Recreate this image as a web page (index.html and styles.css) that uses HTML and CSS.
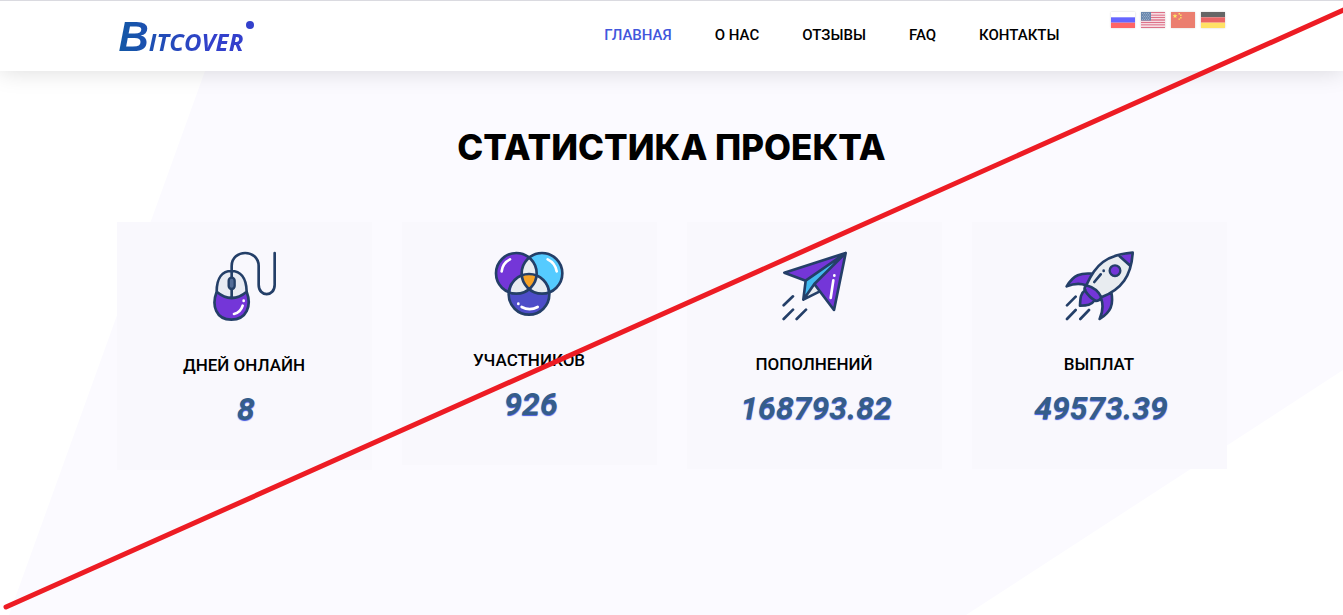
FILE: index.html
```
<!DOCTYPE html>
<html lang="ru">
<head>
<meta charset="utf-8">
<title>Bitcover</title>
<link rel="stylesheet" href="styles.css">
</head>
<body class="page">
<header class="header">
  <div class="container header-row">
    <a class="logo" href="#"><span class="logo-initial">B</span><span class="logo-rest">ITCOVER</span><span class="logo-dot"></span></a>
    <nav class="nav">
      <a class="nav-link active" href="#">ГЛАВНАЯ</a>
      <a class="nav-link" href="#">О НАС</a>
      <a class="nav-link" href="#">ОТЗЫВЫ</a>
      <a class="nav-link" href="#">FAQ</a>
      <a class="nav-link" href="#">КОНТАКТЫ</a>
    </nav>
    <div class="flags">
      <a class="flag" href="#" aria-label="Русский"><svg viewBox="0 0 24 16"><path fill="#fff" d="M0 0h24v16H0z"/><path fill="#00f" d="M0 5.3h24v5.4H0z"/><path fill="red" d="M0 10.7h24V16H0z"/></svg></a>
      <a class="flag" href="#" aria-label="English"><svg viewBox="0 0 24 16"><path fill="#fff" d="M0 0h24v16H0z"/><path stroke="#c8143c" stroke-width="1.4" d="M0 .6h24M0 3.1h24M0 5.5h24M0 8h24M0 10.5h24M0 12.9h24M0 15.4h24"/><path fill="#0a3a78" d="M0 0h10v8.6H0z"/><path stroke="#8fa8c8" stroke-width=".7" stroke-dasharray=".8 1.2" d="M1 1.5h8M2 3h8M1 4.5h8M2 6h8M1 7.5h8"/></svg></a>
      <a class="flag" href="#" aria-label="中文"><svg viewBox="0 0 24 16"><path fill="#de2910" d="M0 0h24v16H0z"/><path fill="#ffde00" d="m4 1.6.6 1.7h1.8L5 4.4l.5 1.8L4 5.1 2.500 6.200 3 4.400 1.600 3.300h1.800zM7.500 1h1.500v1.400H7.500zM9.200 2.600h1.300V4H9.200zM9.200 5h1.300v1.400H9.200zM7.500 6.500h1.400v1.300H7.500z"/></svg></a>
      <a class="flag" href="#" aria-label="Deutsch"><svg viewBox="0 0 24 16"><path d="M0 0h24v5.300H0z"/><path fill="#d00" d="M0 5.300h24v5.400H0z"/><path fill="#ffce00" d="M0 10.700h24V16H0z"/></svg></a>
    </div>
  </div>
</header>
<main class="stats">
  <svg class="backdrop" viewBox="0 0 1343 544" preserveAspectRatio="none" aria-hidden="true"><path d="M205 0H1343V299L966 544H9z"/></svg>
  <div class="container">
    <h1 class="title">СТАТИСТИКА ПРОЕКТА</h1>
    <div class="cards">
      <section class="card">
        <svg class="icon" width="70" height="70" viewBox="57 36 210 210">
          <path fill="#e8ebf3" d="M80 155C80 112 98 93 124 93s45 19 46 62q-46 40-90 0z"/>
          <path fill="#7436d8" d="M80 155q45 38 90 0c16 42 0 84-46 84s-60-42-44-84z"/>
          <path class="line" d="M80 155C80 112 98 93 124 93s45 19 46 62c16 42 0 84-46 84s-60-42-44-84zq45 38 90 0M125 93V78c0-52 81-52 81 0v56c0 38 48 38 48 0V39M125 93v80"/>
          <rect x="116" y="113" width="18" height="34" rx="9" fill="#536d98" stroke="#243f68" stroke-width="7"/>
          <path class="shine" d="M158 197q-6 20-26 25M161 182v1"/>
        </svg>
        <h2 class="label">ДНЕЙ ОНЛАЙН</h2>
        <p class="value">8</p>
      </section>
      <section class="card">
        <svg class="icon" width="70" height="65" viewBox="43 36 210 195">
          <circle cx="110" cy="100" r="61" fill="#7436d8"/><circle cx="187" cy="100" r="61" fill="#55cbff"/><circle cx="148" cy="163" r="61" fill="#4d4dc8"/>
          <path fill="#e8ecf0" d="M148 52q23 23 22 54-22-9-43 0-1-31 21-54zM127 106q2 26 21 41-22 17-56 13 3-39 35-54zM170 106q-2 26-22 41 25 17 57 13-3-39-35-54z"/>
          <path fill="#f5a226" d="M127 106q21-9 43 0-2 26-22 41-19-15-21-41z"/>
          <g class="line"><circle cx="110" cy="100" r="61"/><circle cx="187" cy="100" r="61"/><circle cx="148" cy="163" r="61"/></g>
          <path class="shine" d="M66 94q3-25 25-36M204 58q23 11 27 36M126 201q24 13 48 0M116 191v1"/>
        </svg>
        <h2 class="label">УЧАСТНИКОВ</h2>
        <p class="value">926</p>
      </section>
      <section class="card">
        <svg class="icon" width="70" height="69" viewBox="28 36 210 207">
          <path fill="#7436d8" d="m228 39-35 171-59-78zM228 39 44 98l64 24z"/>
          <path fill="#42baf0" d="m228 39-120 83-7 57 33-47z"/>
          <path fill="#e8ecf0" d="m134 132-33 47 48-24z"/>
          <path class="line" d="m228 39-35 171-59-78zL44 98l64 24zM108 122l-7 57 33-47M101 179l48-24M42 196l28-27M42 237l28-28M81 237l28-28"/>
          <path class="shine" d="m191 121-8 53M194 106v1"/>
        </svg>
        <h2 class="label">ПОПОЛНЕНИЙ</h2>
        <p class="value">168793.82</p>
      </section>
      <section class="card">
        <svg class="icon" width="70" height="69" viewBox="43 36 210 207">
          <g fill="#7436d8"><path d="M128 101c-35-3-56 3-77 38 25-10 43-9 58-3zM154 174c9 25 5 43-4 63 34-22 42-42 35-80zM107 150c-15 10-15 25-16 47 21-1 35-2 43-15z"/></g>
          <path fill="#e8ecf0" d="M249 38C170 44 137 74 110 136l45 36c61-24 90-64 94-134z"/>
          <path fill="#7436d8" d="M249 38q-19 1-39 11l30 27q8-18 9-38zM110 136q-7 5-5 14 14 23 34 33 10 0 16-11-12-27-45-36z"/>
          <path class="line" d="M249 38C170 44 137 74 110 136q33 9 45 36c61-24 90-64 94-134zM210 49l30 27M128 101c-35-3-56 3-77 38 25-10 43-9 58-3M154 174c9 25 5 43-4 63 34-22 42-42 35-80M110 136q-7 5-5 14 14 23 34 33 10 0 16-11M107 150c-15 10-15 25-16 47 21-1 35-2 43-15M52 196l26-26M52 237l26-27M92 237l26-27M134 126l19-23M162 92v1"/>
          <circle cx="196" cy="92" r="16" fill="#7436d8" stroke="#243f68" stroke-width="7"/>
        </svg>
        <h2 class="label">ВЫПЛАТ</h2>
        <p class="value">49573.39</p>
      </section>
    </div>
  </div>
</main>
<svg class="strike" viewBox="0 0 1343 615" preserveAspectRatio="none" aria-hidden="true"><path d="M6 607 1346 9"/></svg>
</body>
</html>
```
FILE: styles.css
```
* { box-sizing: border-box; }
.page {
  margin: 0;
  min-height: 100vh;
  position: relative;
  display: flex;
  flex-direction: column;
  overflow-x: hidden;
  background: #fff;
  color: #000;
  font-family: Roboto, "Noto Sans", sans-serif;
}
.container { width: 100%; max-width: 1140px; margin: 0 auto; padding: 0 15px; }
.header {
  position: relative;
  z-index: 1;
  border-top: 1px solid #dadae0;
  background: #fff;
  box-shadow: 0 0 24px rgba(0, 0, 0, .15);
}
.header-row { display: flex; align-items: center; height: 70px; }
.logo {
  display: flex;
  align-items: baseline;
  margin-top: 6px;
  padding-left: 2px;
  color: transparent;
  background: linear-gradient(90deg, #1258a4, #3340cc 70%);
  background-clip: text;
  text-decoration: none;
}
.logo-initial { font: italic bold 42px/48px "Liberation Sans", sans-serif; }
.logo-rest { font: italic bold 24px/48px "Open Sans", sans-serif; }
.logo-dot { align-self: flex-start; width: 8px; height: 8px; margin: 8px 0 0 3px; border-radius: 50%; background: #3340cc; }
.nav { display: flex; gap: 43px; margin: 0 0 2px auto; }
.nav-link { color: #000; font-size: 15px; font-weight: 500; line-height: 24px; text-decoration: none; }
.nav-link.active { color: #4257dc; }
.flags { display: flex; align-self: flex-start; gap: 6px; margin: 11px 2px 0 51px; }
.flag { width: 24px; height: 16px; opacity: .6; box-shadow: 0 0 2px rgba(0, 0, 0, .3); }
.flag svg { display: block; width: 24px; height: 16px; }
.stats { position: relative; flex: 1; padding: 52px 0 80px; }
.backdrop { position: absolute; inset: 0; width: 100%; height: 100%; fill: #fbfaff; }
.stats .container { position: relative; }
.title { margin: 0 0 51px; font-family: Inter, Roboto, sans-serif; font-size: 35px; font-weight: 800; line-height: 48px; text-align: center; }
.cards { display: grid; grid-template-columns: repeat(4, 1fr); align-items: start; gap: 30px; }
.card { padding: 30px 16px 43px; background: #f9f8fd; text-align: center; }
.icon { display: block; margin: 0 auto 31px; overflow: visible; }
.line { fill: none; stroke: #243f68; stroke-width: 8; stroke-linecap: round; stroke-linejoin: round; }
.shine { fill: none; stroke: #fff; stroke-width: 8; stroke-linecap: round; }
.label { margin: 0 0 14px; font-size: 17px; font-weight: 500; line-height: 24px; }
.value { margin: 0; padding-left: 4px; color: #355d8a; font-size: 32px; font-style: italic; font-weight: 700; line-height: 36px; text-shadow: 0 1px 1px #4257dc; }
.strike { position: absolute; inset: 0; z-index: 2; width: 100%; height: 100%; fill: none; stroke: #ed1c24; stroke-width: 5; stroke-linecap: round; pointer-events: none; }
```
